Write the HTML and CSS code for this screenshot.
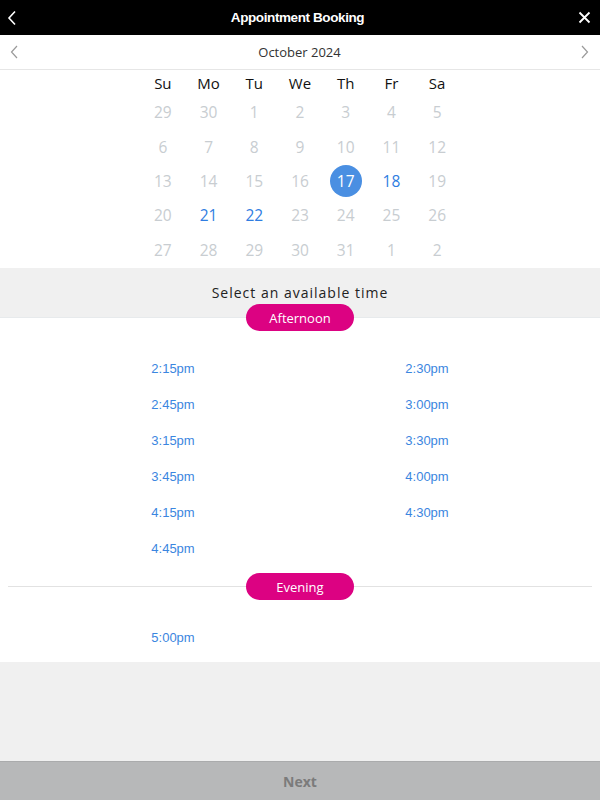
FILE: index.html
```html
<!DOCTYPE html>
<html>
<head>
<meta charset="utf-8">
<link rel="stylesheet" href="styles.css">
</head>
<body>
<div class="page">
  <header class="topbar">
    <svg class="top-back" width="10" height="16" viewBox="0 0 10 16"><path d="M8 1.5 L2 8 L8 14.5" fill="none" stroke="#fff" stroke-width="1.6"/></svg>
    <div class="title">Appointment Booking</div>
    <svg class="top-close" width="13" height="13" viewBox="0 0 13 13"><path d="M1.5 1.5 L11.5 11.5 M11.5 1.5 L1.5 11.5" fill="none" stroke="#fff" stroke-width="1.8"/></svg>
  </header>

  <div class="month">
    <svg class="mchev" width="8" height="14" viewBox="0 0 8 14"><path d="M7 1 L1.5 7 L7 13" fill="none" stroke="#9a9a9a" stroke-width="1.2"/></svg>
    <div class="month-name">October 2024</div>
    <svg class="mchev" width="8" height="14" viewBox="0 0 8 14"><path d="M1 1 L6.5 7 L1 13" fill="none" stroke="#9a9a9a" stroke-width="1.2"/></svg>
  </div>

  <div class="calendar">
    <div class="cal-grid">
      <div class="wd">Su</div><div class="wd">Mo</div><div class="wd">Tu</div><div class="wd">We</div><div class="wd">Th</div><div class="wd">Fr</div><div class="wd">Sa</div>
      <div class="d">29</div><div class="d">30</div><div class="d">1</div><div class="d">2</div><div class="d">3</div><div class="d">4</div><div class="d">5</div>
      <div class="d">6</div><div class="d">7</div><div class="d">8</div><div class="d">9</div><div class="d">10</div><div class="d">11</div><div class="d">12</div>
      <div class="d">13</div><div class="d">14</div><div class="d">15</div><div class="d">16</div><div class="d sel"><span>17</span></div><div class="d av">18</div><div class="d">19</div>
      <div class="d">20</div><div class="d av">21</div><div class="d av">22</div><div class="d">23</div><div class="d">24</div><div class="d">25</div><div class="d">26</div>
      <div class="d">27</div><div class="d">28</div><div class="d">29</div><div class="d">30</div><div class="d">31</div><div class="d">1</div><div class="d">2</div>
    </div>
  </div>

  <div class="select-head">Select an available time</div>

  <div class="slots">
    <div class="pill-row first"><span class="pill">Afternoon</span></div>
    <div class="slot-grid afternoon">
      <div class="slot">2:15pm</div><div class="slot">2:30pm</div>
      <div class="slot">2:45pm</div><div class="slot">3:00pm</div>
      <div class="slot">3:15pm</div><div class="slot">3:30pm</div>
      <div class="slot">3:45pm</div><div class="slot">4:00pm</div>
      <div class="slot">4:15pm</div><div class="slot">4:30pm</div>
      <div class="slot">4:45pm</div>
    </div>
    <div class="pill-row divider"><span class="pill">Evening</span></div>
    <div class="slot-grid evening">
      <div class="slot">5:00pm</div>
    </div>
  </div>

  <div class="filler"></div>

  <footer class="next">Next</footer>
</div>
</body>
</html>
```

FILE: styles.css
```css
* { box-sizing: border-box; }
html, body { margin: 0; padding: 0; }
body {
  background: #f0f0f0;
  font-family: "Open Sans", "Liberation Sans", sans-serif;
}
.page {
  display: flex;
  flex-direction: column;
  height: 800px;
}
.topbar {
  height: 35px;
  background: #000;
  display: flex;
  align-items: center;
  justify-content: space-between;
  padding: 0 9px 0 7px;
  flex-shrink: 0;
}
.title {
  color: #fff;
  font-family: "Liberation Sans", Arial, sans-serif;
  font-weight: bold;
  font-size: 13.5px;
  letter-spacing: -0.4px;
}
.month {
  height: 35px;
  background: #fff;
  border-bottom: 1px solid #e6e6e6;
  display: flex;
  align-items: center;
  justify-content: space-between;
  padding: 0 11px 0 10px;
  flex-shrink: 0;
}
.month-name {
  font-size: 13px;
  color: #333;
}
.calendar {
  background: #fff;
  height: 198px;
  flex-shrink: 0;
  display: flex;
  justify-content: center;
}
.cal-grid {
  width: 320px;
  display: grid;
  grid-template-columns: repeat(7, 1fr);
  grid-template-rows: 25px repeat(5, 34.4px);
  align-items: center;
  justify-items: center;
}
.wd {
  font-size: 15px;
  color: #111;
  line-height: 25px;
  padding-top: 1px;
}
.d {
  font-size: 15.5px;
  color: #c8cdd1;
}
.d.av { color: #2f7de1; }
.d.sel span {
  display: flex;
  align-items: center;
  justify-content: center;
  width: 32px;
  height: 32px;
  border-radius: 50%;
  background: #4a8fe2;
  color: #fff;
}
.select-head {
  height: 50px;
  flex-shrink: 0;
  border-bottom: 1px solid #e7eaec;
  text-align: center;
  font-size: 14px;
  letter-spacing: 1px;
  color: #222;
  padding-top: 15px;
}
.slots {
  background: #fff;
  flex-shrink: 0;
  padding-bottom: 7px;
}
.pill-row {
  display: flex;
  justify-content: center;
  position: relative;
}
.pill-row.first { margin-top: -14px; }
.pill-row.divider { margin: 7px 8px 0; }
.pill-row.divider::before {
  content: "";
  position: absolute;
  left: 0;
  right: 0;
  top: 13px;
  border-top: 1px solid #e2e2e2;
}
.pill {
  position: relative;
  width: 108px;
  height: 27px;
  border-radius: 14px;
  background: #dc0282;
  color: #fff;
  font-size: 13px;
  display: flex;
  align-items: center;
  justify-content: center;
}
.slot-grid {
  display: grid;
  grid-template-columns: 254px 254px;
  justify-content: center;
  grid-auto-rows: 36px;
  margin-top: 19px;
}
.slot {
  font-family: "Liberation Sans", Arial, sans-serif;
  font-size: 13px;
  color: #3b86e0;
  display: flex;
  align-items: center;
  justify-content: center;
}
.filler { flex: 1; }
.next {
  height: 39px;
  flex-shrink: 0;
  background: #b7b8b9;
  border-top: 1px solid #aaabac;
  display: flex;
  align-items: center;
  justify-content: center;
  font-weight: bold;
  font-size: 14px;
  color: #7b7b7b;
}
```
